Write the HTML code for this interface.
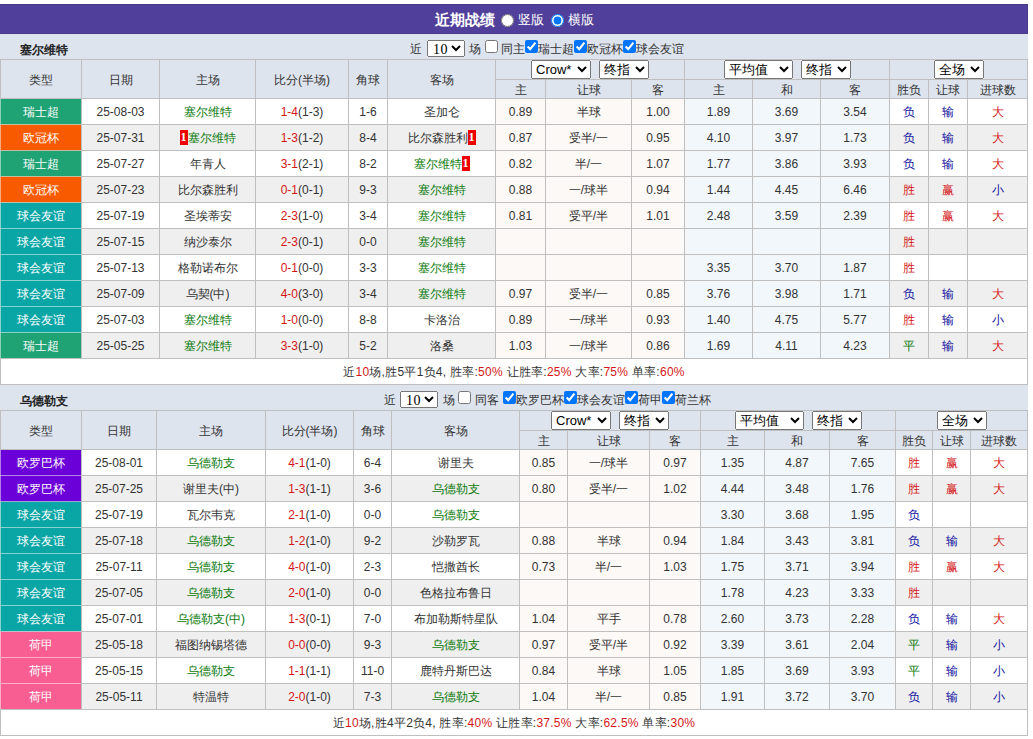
<!DOCTYPE html>
<html><head><meta charset="utf-8">
<style>
html,body{margin:0;padding:0;background:#fff;}
body{width:1033px;height:739px;overflow:hidden;position:relative;font-family:"Liberation Sans",sans-serif;font-size:12px;color:#333;font-weight:400;}
.a{position:absolute;}
.c{position:absolute;text-align:center;white-space:nowrap;overflow:hidden;}
.h{color:#333;}
.t{color:#fff;}
.g{display:flex;align-items:center;justify-content:center;gap:8px;padding-top:0 !important;height:19px !important;}
.rc{display:inline-block;background:#e00;color:#fff;font-weight:bold;width:8px;height:15px;line-height:15px;font-size:12px;vertical-align:middle;text-align:center;position:relative;top:-1px;font-family:'Liberation Serif',serif;}
#bar{position:absolute;left:0;top:4px;width:1027px;height:28px;background:#51409b;border:1px solid #483b8e;border-left:0;color:#fff;}
#bar .ttl{position:absolute;left:435px;top:6px;font-size:15px;font-weight:bold;line-height:18px;}
.tname{position:absolute;left:20px;height:25px;line-height:32px;font-weight:bold;font-size:12px;color:#222;}
.filt{position:absolute;left:0;width:1094px;text-align:center;height:25px;line-height:25px;color:#333;white-space:nowrap;}
.rd{position:absolute;top:9px;margin:0;width:13px;height:13px;}
.rt{position:absolute;top:8px;font-size:12.5px;line-height:14px;}
select{font-family:"Liberation Sans",sans-serif;}
.s10{position:absolute;width:38px;height:17px;font-size:14px;padding:0 0 0 1px;margin:0;letter-spacing:0.5px;font-family:'Liberation Serif',serif !important;}
.ft{position:absolute;line-height:14px;color:#333;white-space:nowrap;}
.cbx{position:absolute;margin:0;}
.sc{height:19px;font-size:13px;padding:0;margin:0;}
input[type=checkbox]{margin:0 1px 0 1px;width:13px;height:13px;vertical-align:middle;}
</style></head><body>
<div id="bar"><span class="ttl">近期战绩</span><input type="radio" name="r" class="rd" style="left:501px"><span class="rt" style="left:518px">竖版</span><input type="radio" name="r" checked class="rd" style="left:551px"><span class="rt" style="left:568px">横版</span></div>
<div class="a" style="left:0px;top:34px;width:1028px;height:25px;background:#dde4ee;"></div>
<div class="tname" style="top:34px">塞尔维特</div>
<span class="ft" style="left:410px;top:42px">近</span>
<select class="s10" style="left:427px;top:40px"><option>10</option></select>
<span class="ft" style="left:469px;top:42px">场</span>
<input type="checkbox" class="cbx" style="left:484px;top:40px">
<span class="ft" style="left:501px;top:42px">同主</span>
<input type="checkbox" checked class="cbx" style="left:524px;top:40px">
<span class="ft" style="left:538px;top:42px">瑞士超</span>
<input type="checkbox" checked class="cbx" style="left:573px;top:40px">
<span class="ft" style="left:587px;top:42px">欧冠杯</span>
<input type="checkbox" checked class="cbx" style="left:622px;top:40px">
<span class="ft" style="left:636px;top:42px">球会友谊</span>
<div class="c h" style="left:1px;top:60px;width:80px;height:37px;padding-top:1px;line-height:38px;background:#dde4ee;">类型</div>
<div class="c h" style="left:82px;top:60px;width:77px;height:37px;padding-top:1px;line-height:38px;background:#dde4ee;">日期</div>
<div class="c h" style="left:160px;top:60px;width:95px;height:37px;padding-top:1px;line-height:38px;background:#dde4ee;">主场</div>
<div class="c h" style="left:256px;top:60px;width:92px;height:37px;padding-top:1px;line-height:38px;background:#dde4ee;">比分(半场)</div>
<div class="c h" style="left:349px;top:60px;width:38px;height:37px;padding-top:1px;line-height:38px;background:#dde4ee;">角球</div>
<div class="c h" style="left:388px;top:60px;width:107px;height:37px;padding-top:1px;line-height:38px;background:#dde4ee;">客场</div>
<div class="c h g" style="left:496px;top:60px;width:188px;height:18px;padding-top:1px;line-height:19px;background:#dde4ee;"><select class="sc" style="width:60px"><option>Crow*</option></select><select class="sc" style="width:50px"><option>终指</option></select></div>
<div class="c h g" style="left:685px;top:60px;width:204px;height:18px;padding-top:1px;line-height:19px;background:#dde4ee;"><select class="sc" style="width:69px"><option>平均值</option></select><select class="sc" style="width:50px"><option>终指</option></select></div>
<div class="c h g" style="left:890px;top:60px;width:137px;height:18px;padding-top:1px;line-height:19px;background:#dde4ee;"><select class="sc" style="width:50px"><option>全场</option></select></div>
<div class="c h" style="left:496px;top:80px;width:49px;height:17px;padding-top:1px;line-height:18px;background:#dde4ee;">主</div>
<div class="c h" style="left:546px;top:80px;width:85px;height:17px;padding-top:1px;line-height:18px;background:#dde4ee;">让球</div>
<div class="c h" style="left:632px;top:80px;width:52px;height:17px;padding-top:1px;line-height:18px;background:#dde4ee;">客</div>
<div class="c h" style="left:685px;top:80px;width:67px;height:17px;padding-top:1px;line-height:18px;background:#dde4ee;">主</div>
<div class="c h" style="left:753px;top:80px;width:67px;height:17px;padding-top:1px;line-height:18px;background:#dde4ee;">和</div>
<div class="c h" style="left:821px;top:80px;width:68px;height:17px;padding-top:1px;line-height:18px;background:#dde4ee;">客</div>
<div class="c h" style="left:890px;top:80px;width:38px;height:17px;padding-top:1px;line-height:18px;background:#dde4ee;">胜负</div>
<div class="c h" style="left:929px;top:80px;width:38px;height:17px;padding-top:1px;line-height:18px;background:#dde4ee;">让球</div>
<div class="c h" style="left:968px;top:80px;width:59px;height:17px;padding-top:1px;line-height:18px;background:#dde4ee;">进球数</div>
<div class="c t" style="left:1px;top:99px;width:80px;height:24px;padding-top:1px;line-height:25px;background:#1fa274;">瑞士超</div>
<div class="c" style="left:82px;top:99px;width:77px;height:24px;padding-top:1px;line-height:25px;background:#ffffff;">25-08-03</div>
<div class="c" style="left:160px;top:99px;width:95px;height:24px;padding-top:1px;line-height:25px;background:#ffffff;"><span style="color:#0c7a0c">塞尔维特</span></div>
<div class="c" style="left:256px;top:99px;width:92px;height:24px;padding-top:1px;line-height:25px;background:#ffffff;"><span style="color:#d41616">1-4</span>(1-3)</div>
<div class="c" style="left:349px;top:99px;width:38px;height:24px;padding-top:1px;line-height:25px;background:#ffffff;">1-6</div>
<div class="c" style="left:388px;top:99px;width:107px;height:24px;padding-top:1px;line-height:25px;background:#ffffff;">圣加仑</div>
<div class="c" style="left:496px;top:99px;width:49px;height:24px;padding-top:1px;line-height:25px;background:#fdf9f6;">0.89</div>
<div class="c" style="left:546px;top:99px;width:85px;height:24px;padding-top:1px;line-height:25px;background:#fdf9f6;">半球</div>
<div class="c" style="left:632px;top:99px;width:52px;height:24px;padding-top:1px;line-height:25px;background:#fdf9f6;">1.00</div>
<div class="c" style="left:685px;top:99px;width:67px;height:24px;padding-top:1px;line-height:25px;background:#f1f7fb;">1.89</div>
<div class="c" style="left:753px;top:99px;width:67px;height:24px;padding-top:1px;line-height:25px;background:#f1f7fb;">3.69</div>
<div class="c" style="left:821px;top:99px;width:68px;height:24px;padding-top:1px;line-height:25px;background:#f1f7fb;">3.54</div>
<div class="c" style="left:890px;top:99px;width:38px;height:24px;padding-top:1px;line-height:25px;background:#ffffff;"><span style="color:#1010a0">负</span></div>
<div class="c" style="left:929px;top:99px;width:38px;height:24px;padding-top:1px;line-height:25px;background:#ffffff;"><span style="color:#1010a0">输</span></div>
<div class="c" style="left:968px;top:99px;width:59px;height:24px;padding-top:1px;line-height:25px;background:#ffffff;"><span style="color:#d41616">大</span></div>
<div class="c t" style="left:1px;top:125px;width:80px;height:24px;padding-top:1px;line-height:25px;background:#f85a00;">欧冠杯</div>
<div class="c" style="left:82px;top:125px;width:77px;height:24px;padding-top:1px;line-height:25px;background:#efefef;">25-07-31</div>
<div class="c" style="left:160px;top:125px;width:95px;height:24px;padding-top:1px;line-height:25px;background:#efefef;"><span class="rc">1</span><span style="color:#0c7a0c">塞尔维特</span></div>
<div class="c" style="left:256px;top:125px;width:92px;height:24px;padding-top:1px;line-height:25px;background:#efefef;"><span style="color:#d41616">1-3</span>(1-2)</div>
<div class="c" style="left:349px;top:125px;width:38px;height:24px;padding-top:1px;line-height:25px;background:#efefef;">8-4</div>
<div class="c" style="left:388px;top:125px;width:107px;height:24px;padding-top:1px;line-height:25px;background:#efefef;">比尔森胜利<span class="rc">1</span></div>
<div class="c" style="left:496px;top:125px;width:49px;height:24px;padding-top:1px;line-height:25px;background:#fdf9f6;">0.87</div>
<div class="c" style="left:546px;top:125px;width:85px;height:24px;padding-top:1px;line-height:25px;background:#fdf9f6;">受半/一</div>
<div class="c" style="left:632px;top:125px;width:52px;height:24px;padding-top:1px;line-height:25px;background:#fdf9f6;">0.95</div>
<div class="c" style="left:685px;top:125px;width:67px;height:24px;padding-top:1px;line-height:25px;background:#f1f7fb;">4.10</div>
<div class="c" style="left:753px;top:125px;width:67px;height:24px;padding-top:1px;line-height:25px;background:#f1f7fb;">3.97</div>
<div class="c" style="left:821px;top:125px;width:68px;height:24px;padding-top:1px;line-height:25px;background:#f1f7fb;">1.73</div>
<div class="c" style="left:890px;top:125px;width:38px;height:24px;padding-top:1px;line-height:25px;background:#efefef;"><span style="color:#1010a0">负</span></div>
<div class="c" style="left:929px;top:125px;width:38px;height:24px;padding-top:1px;line-height:25px;background:#efefef;"><span style="color:#1010a0">输</span></div>
<div class="c" style="left:968px;top:125px;width:59px;height:24px;padding-top:1px;line-height:25px;background:#efefef;"><span style="color:#d41616">大</span></div>
<div class="c t" style="left:1px;top:151px;width:80px;height:24px;padding-top:1px;line-height:25px;background:#1fa274;">瑞士超</div>
<div class="c" style="left:82px;top:151px;width:77px;height:24px;padding-top:1px;line-height:25px;background:#ffffff;">25-07-27</div>
<div class="c" style="left:160px;top:151px;width:95px;height:24px;padding-top:1px;line-height:25px;background:#ffffff;">年青人</div>
<div class="c" style="left:256px;top:151px;width:92px;height:24px;padding-top:1px;line-height:25px;background:#ffffff;"><span style="color:#d41616">3-1</span>(2-1)</div>
<div class="c" style="left:349px;top:151px;width:38px;height:24px;padding-top:1px;line-height:25px;background:#ffffff;">8-2</div>
<div class="c" style="left:388px;top:151px;width:107px;height:24px;padding-top:1px;line-height:25px;background:#ffffff;"><span style="color:#0c7a0c">塞尔维特</span><span class="rc">1</span></div>
<div class="c" style="left:496px;top:151px;width:49px;height:24px;padding-top:1px;line-height:25px;background:#fdf9f6;">0.82</div>
<div class="c" style="left:546px;top:151px;width:85px;height:24px;padding-top:1px;line-height:25px;background:#fdf9f6;">半/一</div>
<div class="c" style="left:632px;top:151px;width:52px;height:24px;padding-top:1px;line-height:25px;background:#fdf9f6;">1.07</div>
<div class="c" style="left:685px;top:151px;width:67px;height:24px;padding-top:1px;line-height:25px;background:#f1f7fb;">1.77</div>
<div class="c" style="left:753px;top:151px;width:67px;height:24px;padding-top:1px;line-height:25px;background:#f1f7fb;">3.86</div>
<div class="c" style="left:821px;top:151px;width:68px;height:24px;padding-top:1px;line-height:25px;background:#f1f7fb;">3.93</div>
<div class="c" style="left:890px;top:151px;width:38px;height:24px;padding-top:1px;line-height:25px;background:#ffffff;"><span style="color:#1010a0">负</span></div>
<div class="c" style="left:929px;top:151px;width:38px;height:24px;padding-top:1px;line-height:25px;background:#ffffff;"><span style="color:#1010a0">输</span></div>
<div class="c" style="left:968px;top:151px;width:59px;height:24px;padding-top:1px;line-height:25px;background:#ffffff;"><span style="color:#d41616">大</span></div>
<div class="c t" style="left:1px;top:177px;width:80px;height:24px;padding-top:1px;line-height:25px;background:#f85a00;">欧冠杯</div>
<div class="c" style="left:82px;top:177px;width:77px;height:24px;padding-top:1px;line-height:25px;background:#efefef;">25-07-23</div>
<div class="c" style="left:160px;top:177px;width:95px;height:24px;padding-top:1px;line-height:25px;background:#efefef;">比尔森胜利</div>
<div class="c" style="left:256px;top:177px;width:92px;height:24px;padding-top:1px;line-height:25px;background:#efefef;"><span style="color:#d41616">0-1</span>(0-1)</div>
<div class="c" style="left:349px;top:177px;width:38px;height:24px;padding-top:1px;line-height:25px;background:#efefef;">9-3</div>
<div class="c" style="left:388px;top:177px;width:107px;height:24px;padding-top:1px;line-height:25px;background:#efefef;"><span style="color:#0c7a0c">塞尔维特</span></div>
<div class="c" style="left:496px;top:177px;width:49px;height:24px;padding-top:1px;line-height:25px;background:#fdf9f6;">0.88</div>
<div class="c" style="left:546px;top:177px;width:85px;height:24px;padding-top:1px;line-height:25px;background:#fdf9f6;">一/球半</div>
<div class="c" style="left:632px;top:177px;width:52px;height:24px;padding-top:1px;line-height:25px;background:#fdf9f6;">0.94</div>
<div class="c" style="left:685px;top:177px;width:67px;height:24px;padding-top:1px;line-height:25px;background:#f1f7fb;">1.44</div>
<div class="c" style="left:753px;top:177px;width:67px;height:24px;padding-top:1px;line-height:25px;background:#f1f7fb;">4.45</div>
<div class="c" style="left:821px;top:177px;width:68px;height:24px;padding-top:1px;line-height:25px;background:#f1f7fb;">6.46</div>
<div class="c" style="left:890px;top:177px;width:38px;height:24px;padding-top:1px;line-height:25px;background:#efefef;"><span style="color:#d41616">胜</span></div>
<div class="c" style="left:929px;top:177px;width:38px;height:24px;padding-top:1px;line-height:25px;background:#efefef;"><span style="color:#d41616">赢</span></div>
<div class="c" style="left:968px;top:177px;width:59px;height:24px;padding-top:1px;line-height:25px;background:#efefef;"><span style="color:#1010a0">小</span></div>
<div class="c t" style="left:1px;top:203px;width:80px;height:24px;padding-top:1px;line-height:25px;background:#0aa6a6;">球会友谊</div>
<div class="c" style="left:82px;top:203px;width:77px;height:24px;padding-top:1px;line-height:25px;background:#ffffff;">25-07-19</div>
<div class="c" style="left:160px;top:203px;width:95px;height:24px;padding-top:1px;line-height:25px;background:#ffffff;">圣埃蒂安</div>
<div class="c" style="left:256px;top:203px;width:92px;height:24px;padding-top:1px;line-height:25px;background:#ffffff;"><span style="color:#d41616">2-3</span>(1-0)</div>
<div class="c" style="left:349px;top:203px;width:38px;height:24px;padding-top:1px;line-height:25px;background:#ffffff;">3-4</div>
<div class="c" style="left:388px;top:203px;width:107px;height:24px;padding-top:1px;line-height:25px;background:#ffffff;"><span style="color:#0c7a0c">塞尔维特</span></div>
<div class="c" style="left:496px;top:203px;width:49px;height:24px;padding-top:1px;line-height:25px;background:#fdf9f6;">0.81</div>
<div class="c" style="left:546px;top:203px;width:85px;height:24px;padding-top:1px;line-height:25px;background:#fdf9f6;">受平/半</div>
<div class="c" style="left:632px;top:203px;width:52px;height:24px;padding-top:1px;line-height:25px;background:#fdf9f6;">1.01</div>
<div class="c" style="left:685px;top:203px;width:67px;height:24px;padding-top:1px;line-height:25px;background:#f1f7fb;">2.48</div>
<div class="c" style="left:753px;top:203px;width:67px;height:24px;padding-top:1px;line-height:25px;background:#f1f7fb;">3.59</div>
<div class="c" style="left:821px;top:203px;width:68px;height:24px;padding-top:1px;line-height:25px;background:#f1f7fb;">2.39</div>
<div class="c" style="left:890px;top:203px;width:38px;height:24px;padding-top:1px;line-height:25px;background:#ffffff;"><span style="color:#d41616">胜</span></div>
<div class="c" style="left:929px;top:203px;width:38px;height:24px;padding-top:1px;line-height:25px;background:#ffffff;"><span style="color:#d41616">赢</span></div>
<div class="c" style="left:968px;top:203px;width:59px;height:24px;padding-top:1px;line-height:25px;background:#ffffff;"><span style="color:#d41616">大</span></div>
<div class="c t" style="left:1px;top:229px;width:80px;height:24px;padding-top:1px;line-height:25px;background:#0aa6a6;">球会友谊</div>
<div class="c" style="left:82px;top:229px;width:77px;height:24px;padding-top:1px;line-height:25px;background:#efefef;">25-07-15</div>
<div class="c" style="left:160px;top:229px;width:95px;height:24px;padding-top:1px;line-height:25px;background:#efefef;">纳沙泰尔</div>
<div class="c" style="left:256px;top:229px;width:92px;height:24px;padding-top:1px;line-height:25px;background:#efefef;"><span style="color:#d41616">2-3</span>(0-1)</div>
<div class="c" style="left:349px;top:229px;width:38px;height:24px;padding-top:1px;line-height:25px;background:#efefef;">0-0</div>
<div class="c" style="left:388px;top:229px;width:107px;height:24px;padding-top:1px;line-height:25px;background:#efefef;"><span style="color:#0c7a0c">塞尔维特</span></div>
<div class="c" style="left:496px;top:229px;width:49px;height:24px;padding-top:1px;line-height:25px;background:#fdf9f6;"></div>
<div class="c" style="left:546px;top:229px;width:85px;height:24px;padding-top:1px;line-height:25px;background:#fdf9f6;"></div>
<div class="c" style="left:632px;top:229px;width:52px;height:24px;padding-top:1px;line-height:25px;background:#fdf9f6;"></div>
<div class="c" style="left:685px;top:229px;width:67px;height:24px;padding-top:1px;line-height:25px;background:#f1f7fb;"></div>
<div class="c" style="left:753px;top:229px;width:67px;height:24px;padding-top:1px;line-height:25px;background:#f1f7fb;"></div>
<div class="c" style="left:821px;top:229px;width:68px;height:24px;padding-top:1px;line-height:25px;background:#f1f7fb;"></div>
<div class="c" style="left:890px;top:229px;width:38px;height:24px;padding-top:1px;line-height:25px;background:#efefef;"><span style="color:#d41616">胜</span></div>
<div class="c" style="left:929px;top:229px;width:38px;height:24px;padding-top:1px;line-height:25px;background:#efefef;"><span style="color:#1010a0"></span></div>
<div class="c" style="left:968px;top:229px;width:59px;height:24px;padding-top:1px;line-height:25px;background:#efefef;"><span style="color:#1010a0"></span></div>
<div class="c t" style="left:1px;top:255px;width:80px;height:24px;padding-top:1px;line-height:25px;background:#0aa6a6;">球会友谊</div>
<div class="c" style="left:82px;top:255px;width:77px;height:24px;padding-top:1px;line-height:25px;background:#ffffff;">25-07-13</div>
<div class="c" style="left:160px;top:255px;width:95px;height:24px;padding-top:1px;line-height:25px;background:#ffffff;">格勒诺布尔</div>
<div class="c" style="left:256px;top:255px;width:92px;height:24px;padding-top:1px;line-height:25px;background:#ffffff;"><span style="color:#d41616">0-1</span>(0-0)</div>
<div class="c" style="left:349px;top:255px;width:38px;height:24px;padding-top:1px;line-height:25px;background:#ffffff;">3-3</div>
<div class="c" style="left:388px;top:255px;width:107px;height:24px;padding-top:1px;line-height:25px;background:#ffffff;"><span style="color:#0c7a0c">塞尔维特</span></div>
<div class="c" style="left:496px;top:255px;width:49px;height:24px;padding-top:1px;line-height:25px;background:#fdf9f6;"></div>
<div class="c" style="left:546px;top:255px;width:85px;height:24px;padding-top:1px;line-height:25px;background:#fdf9f6;"></div>
<div class="c" style="left:632px;top:255px;width:52px;height:24px;padding-top:1px;line-height:25px;background:#fdf9f6;"></div>
<div class="c" style="left:685px;top:255px;width:67px;height:24px;padding-top:1px;line-height:25px;background:#f1f7fb;">3.35</div>
<div class="c" style="left:753px;top:255px;width:67px;height:24px;padding-top:1px;line-height:25px;background:#f1f7fb;">3.70</div>
<div class="c" style="left:821px;top:255px;width:68px;height:24px;padding-top:1px;line-height:25px;background:#f1f7fb;">1.87</div>
<div class="c" style="left:890px;top:255px;width:38px;height:24px;padding-top:1px;line-height:25px;background:#ffffff;"><span style="color:#d41616">胜</span></div>
<div class="c" style="left:929px;top:255px;width:38px;height:24px;padding-top:1px;line-height:25px;background:#ffffff;"><span style="color:#1010a0"></span></div>
<div class="c" style="left:968px;top:255px;width:59px;height:24px;padding-top:1px;line-height:25px;background:#ffffff;"><span style="color:#1010a0"></span></div>
<div class="c t" style="left:1px;top:281px;width:80px;height:24px;padding-top:1px;line-height:25px;background:#0aa6a6;">球会友谊</div>
<div class="c" style="left:82px;top:281px;width:77px;height:24px;padding-top:1px;line-height:25px;background:#efefef;">25-07-09</div>
<div class="c" style="left:160px;top:281px;width:95px;height:24px;padding-top:1px;line-height:25px;background:#efefef;">乌契(中)</div>
<div class="c" style="left:256px;top:281px;width:92px;height:24px;padding-top:1px;line-height:25px;background:#efefef;"><span style="color:#d41616">4-0</span>(3-0)</div>
<div class="c" style="left:349px;top:281px;width:38px;height:24px;padding-top:1px;line-height:25px;background:#efefef;">3-4</div>
<div class="c" style="left:388px;top:281px;width:107px;height:24px;padding-top:1px;line-height:25px;background:#efefef;"><span style="color:#0c7a0c">塞尔维特</span></div>
<div class="c" style="left:496px;top:281px;width:49px;height:24px;padding-top:1px;line-height:25px;background:#fdf9f6;">0.97</div>
<div class="c" style="left:546px;top:281px;width:85px;height:24px;padding-top:1px;line-height:25px;background:#fdf9f6;">受半/一</div>
<div class="c" style="left:632px;top:281px;width:52px;height:24px;padding-top:1px;line-height:25px;background:#fdf9f6;">0.85</div>
<div class="c" style="left:685px;top:281px;width:67px;height:24px;padding-top:1px;line-height:25px;background:#f1f7fb;">3.76</div>
<div class="c" style="left:753px;top:281px;width:67px;height:24px;padding-top:1px;line-height:25px;background:#f1f7fb;">3.98</div>
<div class="c" style="left:821px;top:281px;width:68px;height:24px;padding-top:1px;line-height:25px;background:#f1f7fb;">1.71</div>
<div class="c" style="left:890px;top:281px;width:38px;height:24px;padding-top:1px;line-height:25px;background:#efefef;"><span style="color:#1010a0">负</span></div>
<div class="c" style="left:929px;top:281px;width:38px;height:24px;padding-top:1px;line-height:25px;background:#efefef;"><span style="color:#1010a0">输</span></div>
<div class="c" style="left:968px;top:281px;width:59px;height:24px;padding-top:1px;line-height:25px;background:#efefef;"><span style="color:#d41616">大</span></div>
<div class="c t" style="left:1px;top:307px;width:80px;height:24px;padding-top:1px;line-height:25px;background:#0aa6a6;">球会友谊</div>
<div class="c" style="left:82px;top:307px;width:77px;height:24px;padding-top:1px;line-height:25px;background:#ffffff;">25-07-03</div>
<div class="c" style="left:160px;top:307px;width:95px;height:24px;padding-top:1px;line-height:25px;background:#ffffff;"><span style="color:#0c7a0c">塞尔维特</span></div>
<div class="c" style="left:256px;top:307px;width:92px;height:24px;padding-top:1px;line-height:25px;background:#ffffff;"><span style="color:#d41616">1-0</span>(0-0)</div>
<div class="c" style="left:349px;top:307px;width:38px;height:24px;padding-top:1px;line-height:25px;background:#ffffff;">8-8</div>
<div class="c" style="left:388px;top:307px;width:107px;height:24px;padding-top:1px;line-height:25px;background:#ffffff;">卡洛治</div>
<div class="c" style="left:496px;top:307px;width:49px;height:24px;padding-top:1px;line-height:25px;background:#fdf9f6;">0.89</div>
<div class="c" style="left:546px;top:307px;width:85px;height:24px;padding-top:1px;line-height:25px;background:#fdf9f6;">一/球半</div>
<div class="c" style="left:632px;top:307px;width:52px;height:24px;padding-top:1px;line-height:25px;background:#fdf9f6;">0.93</div>
<div class="c" style="left:685px;top:307px;width:67px;height:24px;padding-top:1px;line-height:25px;background:#f1f7fb;">1.40</div>
<div class="c" style="left:753px;top:307px;width:67px;height:24px;padding-top:1px;line-height:25px;background:#f1f7fb;">4.75</div>
<div class="c" style="left:821px;top:307px;width:68px;height:24px;padding-top:1px;line-height:25px;background:#f1f7fb;">5.77</div>
<div class="c" style="left:890px;top:307px;width:38px;height:24px;padding-top:1px;line-height:25px;background:#ffffff;"><span style="color:#d41616">胜</span></div>
<div class="c" style="left:929px;top:307px;width:38px;height:24px;padding-top:1px;line-height:25px;background:#ffffff;"><span style="color:#1010a0">输</span></div>
<div class="c" style="left:968px;top:307px;width:59px;height:24px;padding-top:1px;line-height:25px;background:#ffffff;"><span style="color:#1010a0">小</span></div>
<div class="c t" style="left:1px;top:333px;width:80px;height:24px;padding-top:1px;line-height:25px;background:#1fa274;">瑞士超</div>
<div class="c" style="left:82px;top:333px;width:77px;height:24px;padding-top:1px;line-height:25px;background:#efefef;">25-05-25</div>
<div class="c" style="left:160px;top:333px;width:95px;height:24px;padding-top:1px;line-height:25px;background:#efefef;"><span style="color:#0c7a0c">塞尔维特</span></div>
<div class="c" style="left:256px;top:333px;width:92px;height:24px;padding-top:1px;line-height:25px;background:#efefef;"><span style="color:#d41616">3-3</span>(1-0)</div>
<div class="c" style="left:349px;top:333px;width:38px;height:24px;padding-top:1px;line-height:25px;background:#efefef;">5-2</div>
<div class="c" style="left:388px;top:333px;width:107px;height:24px;padding-top:1px;line-height:25px;background:#efefef;">洛桑</div>
<div class="c" style="left:496px;top:333px;width:49px;height:24px;padding-top:1px;line-height:25px;background:#fdf9f6;">1.03</div>
<div class="c" style="left:546px;top:333px;width:85px;height:24px;padding-top:1px;line-height:25px;background:#fdf9f6;">一/球半</div>
<div class="c" style="left:632px;top:333px;width:52px;height:24px;padding-top:1px;line-height:25px;background:#fdf9f6;">0.86</div>
<div class="c" style="left:685px;top:333px;width:67px;height:24px;padding-top:1px;line-height:25px;background:#f1f7fb;">1.69</div>
<div class="c" style="left:753px;top:333px;width:67px;height:24px;padding-top:1px;line-height:25px;background:#f1f7fb;">4.11</div>
<div class="c" style="left:821px;top:333px;width:68px;height:24px;padding-top:1px;line-height:25px;background:#f1f7fb;">4.23</div>
<div class="c" style="left:890px;top:333px;width:38px;height:24px;padding-top:1px;line-height:25px;background:#efefef;"><span style="color:#0c7a0c">平</span></div>
<div class="c" style="left:929px;top:333px;width:38px;height:24px;padding-top:1px;line-height:25px;background:#efefef;"><span style="color:#1010a0">输</span></div>
<div class="c" style="left:968px;top:333px;width:59px;height:24px;padding-top:1px;line-height:25px;background:#efefef;"><span style="color:#d41616">大</span></div>
<div class="c" style="left:1px;top:359px;width:1026px;height:24px;padding-top:1px;line-height:25px;background:#ffffff;"><span style="letter-spacing:0.26px">近<span style="color:#d41616">10</span>场,胜5平1负4, 胜率:<span style="color:#d41616">50%</span> 让胜率:<span style="color:#d41616">25%</span> 大率:<span style="color:#d41616">75%</span> 单率:<span style="color:#d41616">60%</span></span></div>
<div class="a" style="left:0px;top:59px;width:1028px;height:1px;background:#bfbfbf;"></div>
<div class="a" style="left:495px;top:79px;width:533px;height:1px;background:#bfbfbf;"></div>
<div class="a" style="left:0px;top:98px;width:1028px;height:1px;background:#bfbfbf;"></div>
<div class="a" style="left:0px;top:124px;width:1028px;height:1px;background:#bfbfbf;"></div>
<div class="a" style="left:0px;top:150px;width:1028px;height:1px;background:#bfbfbf;"></div>
<div class="a" style="left:0px;top:176px;width:1028px;height:1px;background:#bfbfbf;"></div>
<div class="a" style="left:0px;top:202px;width:1028px;height:1px;background:#bfbfbf;"></div>
<div class="a" style="left:0px;top:228px;width:1028px;height:1px;background:#bfbfbf;"></div>
<div class="a" style="left:0px;top:254px;width:1028px;height:1px;background:#bfbfbf;"></div>
<div class="a" style="left:0px;top:280px;width:1028px;height:1px;background:#bfbfbf;"></div>
<div class="a" style="left:0px;top:306px;width:1028px;height:1px;background:#bfbfbf;"></div>
<div class="a" style="left:0px;top:332px;width:1028px;height:1px;background:#bfbfbf;"></div>
<div class="a" style="left:0px;top:358px;width:1028px;height:1px;background:#bfbfbf;"></div>
<div class="a" style="left:0px;top:384px;width:1028px;height:1px;background:#bfbfbf;"></div>
<div class="a" style="left:0px;top:59px;width:1px;height:326px;background:#bfbfbf;"></div>
<div class="a" style="left:81px;top:59px;width:1px;height:300px;background:#bfbfbf;"></div>
<div class="a" style="left:159px;top:59px;width:1px;height:300px;background:#bfbfbf;"></div>
<div class="a" style="left:255px;top:59px;width:1px;height:300px;background:#bfbfbf;"></div>
<div class="a" style="left:348px;top:59px;width:1px;height:300px;background:#bfbfbf;"></div>
<div class="a" style="left:387px;top:59px;width:1px;height:300px;background:#bfbfbf;"></div>
<div class="a" style="left:495px;top:59px;width:1px;height:300px;background:#bfbfbf;"></div>
<div class="a" style="left:545px;top:79px;width:1px;height:280px;background:#bfbfbf;"></div>
<div class="a" style="left:631px;top:79px;width:1px;height:280px;background:#bfbfbf;"></div>
<div class="a" style="left:684px;top:59px;width:1px;height:300px;background:#bfbfbf;"></div>
<div class="a" style="left:752px;top:79px;width:1px;height:280px;background:#bfbfbf;"></div>
<div class="a" style="left:820px;top:79px;width:1px;height:280px;background:#bfbfbf;"></div>
<div class="a" style="left:889px;top:59px;width:1px;height:300px;background:#bfbfbf;"></div>
<div class="a" style="left:928px;top:79px;width:1px;height:280px;background:#bfbfbf;"></div>
<div class="a" style="left:967px;top:79px;width:1px;height:280px;background:#bfbfbf;"></div>
<div class="a" style="left:1027px;top:59px;width:1px;height:326px;background:#bfbfbf;"></div>
<div class="a" style="left:0px;top:385px;width:1028px;height:25px;background:#dde4ee;"></div>
<div class="tname" style="top:385px">乌德勒支</div>
<span class="ft" style="left:384px;top:393px">近</span>
<select class="s10" style="left:400px;top:391px"><option>10</option></select>
<span class="ft" style="left:443px;top:393px">场</span>
<input type="checkbox" class="cbx" style="left:457px;top:391px">
<span class="ft" style="left:475px;top:393px">同客</span>
<input type="checkbox" checked class="cbx" style="left:502px;top:391px">
<span class="ft" style="left:516px;top:393px">欧罗巴杯</span>
<input type="checkbox" checked class="cbx" style="left:563px;top:391px">
<span class="ft" style="left:577px;top:393px">球会友谊</span>
<input type="checkbox" checked class="cbx" style="left:624px;top:391px">
<span class="ft" style="left:638px;top:393px">荷甲</span>
<input type="checkbox" checked class="cbx" style="left:661px;top:391px">
<span class="ft" style="left:675px;top:393px">荷兰杯</span>
<div class="c h" style="left:1px;top:411px;width:80px;height:37px;padding-top:1px;line-height:38px;background:#dde4ee;">类型</div>
<div class="c h" style="left:82px;top:411px;width:74px;height:37px;padding-top:1px;line-height:38px;background:#dde4ee;">日期</div>
<div class="c h" style="left:157px;top:411px;width:108px;height:37px;padding-top:1px;line-height:38px;background:#dde4ee;">主场</div>
<div class="c h" style="left:266px;top:411px;width:87px;height:37px;padding-top:1px;line-height:38px;background:#dde4ee;">比分(半场)</div>
<div class="c h" style="left:354px;top:411px;width:37px;height:37px;padding-top:1px;line-height:38px;background:#dde4ee;">角球</div>
<div class="c h" style="left:392px;top:411px;width:127px;height:37px;padding-top:1px;line-height:38px;background:#dde4ee;">客场</div>
<div class="c h g" style="left:520px;top:411px;width:180px;height:18px;padding-top:1px;line-height:19px;background:#dde4ee;"><select class="sc" style="width:60px"><option>Crow*</option></select><select class="sc" style="width:50px"><option>终指</option></select></div>
<div class="c h g" style="left:701px;top:411px;width:194px;height:18px;padding-top:1px;line-height:19px;background:#dde4ee;"><select class="sc" style="width:69px"><option>平均值</option></select><select class="sc" style="width:50px"><option>终指</option></select></div>
<div class="c h g" style="left:896px;top:411px;width:131px;height:18px;padding-top:1px;line-height:19px;background:#dde4ee;"><select class="sc" style="width:50px"><option>全场</option></select></div>
<div class="c h" style="left:520px;top:431px;width:47px;height:17px;padding-top:1px;line-height:18px;background:#dde4ee;">主</div>
<div class="c h" style="left:568px;top:431px;width:81px;height:17px;padding-top:1px;line-height:18px;background:#dde4ee;">让球</div>
<div class="c h" style="left:650px;top:431px;width:50px;height:17px;padding-top:1px;line-height:18px;background:#dde4ee;">客</div>
<div class="c h" style="left:701px;top:431px;width:63px;height:17px;padding-top:1px;line-height:18px;background:#dde4ee;">主</div>
<div class="c h" style="left:765px;top:431px;width:64px;height:17px;padding-top:1px;line-height:18px;background:#dde4ee;">和</div>
<div class="c h" style="left:830px;top:431px;width:65px;height:17px;padding-top:1px;line-height:18px;background:#dde4ee;">客</div>
<div class="c h" style="left:896px;top:431px;width:36px;height:17px;padding-top:1px;line-height:18px;background:#dde4ee;">胜负</div>
<div class="c h" style="left:933px;top:431px;width:37px;height:17px;padding-top:1px;line-height:18px;background:#dde4ee;">让球</div>
<div class="c h" style="left:971px;top:431px;width:56px;height:17px;padding-top:1px;line-height:18px;background:#dde4ee;">进球数</div>
<div class="c t" style="left:1px;top:450px;width:80px;height:24px;padding-top:1px;line-height:25px;background:#6c00d8;">欧罗巴杯</div>
<div class="c" style="left:82px;top:450px;width:74px;height:24px;padding-top:1px;line-height:25px;background:#ffffff;">25-08-01</div>
<div class="c" style="left:157px;top:450px;width:108px;height:24px;padding-top:1px;line-height:25px;background:#ffffff;"><span style="color:#0c7a0c">乌德勒支</span></div>
<div class="c" style="left:266px;top:450px;width:87px;height:24px;padding-top:1px;line-height:25px;background:#ffffff;"><span style="color:#d41616">4-1</span>(1-0)</div>
<div class="c" style="left:354px;top:450px;width:37px;height:24px;padding-top:1px;line-height:25px;background:#ffffff;">6-4</div>
<div class="c" style="left:392px;top:450px;width:127px;height:24px;padding-top:1px;line-height:25px;background:#ffffff;">谢里夫</div>
<div class="c" style="left:520px;top:450px;width:47px;height:24px;padding-top:1px;line-height:25px;background:#fdf9f6;">0.85</div>
<div class="c" style="left:568px;top:450px;width:81px;height:24px;padding-top:1px;line-height:25px;background:#fdf9f6;">一/球半</div>
<div class="c" style="left:650px;top:450px;width:50px;height:24px;padding-top:1px;line-height:25px;background:#fdf9f6;">0.97</div>
<div class="c" style="left:701px;top:450px;width:63px;height:24px;padding-top:1px;line-height:25px;background:#f1f7fb;">1.35</div>
<div class="c" style="left:765px;top:450px;width:64px;height:24px;padding-top:1px;line-height:25px;background:#f1f7fb;">4.87</div>
<div class="c" style="left:830px;top:450px;width:65px;height:24px;padding-top:1px;line-height:25px;background:#f1f7fb;">7.65</div>
<div class="c" style="left:896px;top:450px;width:36px;height:24px;padding-top:1px;line-height:25px;background:#ffffff;"><span style="color:#d41616">胜</span></div>
<div class="c" style="left:933px;top:450px;width:37px;height:24px;padding-top:1px;line-height:25px;background:#ffffff;"><span style="color:#d41616">赢</span></div>
<div class="c" style="left:971px;top:450px;width:56px;height:24px;padding-top:1px;line-height:25px;background:#ffffff;"><span style="color:#d41616">大</span></div>
<div class="c t" style="left:1px;top:476px;width:80px;height:24px;padding-top:1px;line-height:25px;background:#6c00d8;">欧罗巴杯</div>
<div class="c" style="left:82px;top:476px;width:74px;height:24px;padding-top:1px;line-height:25px;background:#efefef;">25-07-25</div>
<div class="c" style="left:157px;top:476px;width:108px;height:24px;padding-top:1px;line-height:25px;background:#efefef;">谢里夫(中)</div>
<div class="c" style="left:266px;top:476px;width:87px;height:24px;padding-top:1px;line-height:25px;background:#efefef;"><span style="color:#d41616">1-3</span>(1-1)</div>
<div class="c" style="left:354px;top:476px;width:37px;height:24px;padding-top:1px;line-height:25px;background:#efefef;">3-6</div>
<div class="c" style="left:392px;top:476px;width:127px;height:24px;padding-top:1px;line-height:25px;background:#efefef;"><span style="color:#0c7a0c">乌德勒支</span></div>
<div class="c" style="left:520px;top:476px;width:47px;height:24px;padding-top:1px;line-height:25px;background:#fdf9f6;">0.80</div>
<div class="c" style="left:568px;top:476px;width:81px;height:24px;padding-top:1px;line-height:25px;background:#fdf9f6;">受半/一</div>
<div class="c" style="left:650px;top:476px;width:50px;height:24px;padding-top:1px;line-height:25px;background:#fdf9f6;">1.02</div>
<div class="c" style="left:701px;top:476px;width:63px;height:24px;padding-top:1px;line-height:25px;background:#f1f7fb;">4.44</div>
<div class="c" style="left:765px;top:476px;width:64px;height:24px;padding-top:1px;line-height:25px;background:#f1f7fb;">3.48</div>
<div class="c" style="left:830px;top:476px;width:65px;height:24px;padding-top:1px;line-height:25px;background:#f1f7fb;">1.76</div>
<div class="c" style="left:896px;top:476px;width:36px;height:24px;padding-top:1px;line-height:25px;background:#efefef;"><span style="color:#d41616">胜</span></div>
<div class="c" style="left:933px;top:476px;width:37px;height:24px;padding-top:1px;line-height:25px;background:#efefef;"><span style="color:#d41616">赢</span></div>
<div class="c" style="left:971px;top:476px;width:56px;height:24px;padding-top:1px;line-height:25px;background:#efefef;"><span style="color:#d41616">大</span></div>
<div class="c t" style="left:1px;top:502px;width:80px;height:24px;padding-top:1px;line-height:25px;background:#0aa6a6;">球会友谊</div>
<div class="c" style="left:82px;top:502px;width:74px;height:24px;padding-top:1px;line-height:25px;background:#ffffff;">25-07-19</div>
<div class="c" style="left:157px;top:502px;width:108px;height:24px;padding-top:1px;line-height:25px;background:#ffffff;">瓦尔韦克</div>
<div class="c" style="left:266px;top:502px;width:87px;height:24px;padding-top:1px;line-height:25px;background:#ffffff;"><span style="color:#d41616">2-1</span>(1-0)</div>
<div class="c" style="left:354px;top:502px;width:37px;height:24px;padding-top:1px;line-height:25px;background:#ffffff;">0-0</div>
<div class="c" style="left:392px;top:502px;width:127px;height:24px;padding-top:1px;line-height:25px;background:#ffffff;"><span style="color:#0c7a0c">乌德勒支</span></div>
<div class="c" style="left:520px;top:502px;width:47px;height:24px;padding-top:1px;line-height:25px;background:#fdf9f6;"></div>
<div class="c" style="left:568px;top:502px;width:81px;height:24px;padding-top:1px;line-height:25px;background:#fdf9f6;"></div>
<div class="c" style="left:650px;top:502px;width:50px;height:24px;padding-top:1px;line-height:25px;background:#fdf9f6;"></div>
<div class="c" style="left:701px;top:502px;width:63px;height:24px;padding-top:1px;line-height:25px;background:#f1f7fb;">3.30</div>
<div class="c" style="left:765px;top:502px;width:64px;height:24px;padding-top:1px;line-height:25px;background:#f1f7fb;">3.68</div>
<div class="c" style="left:830px;top:502px;width:65px;height:24px;padding-top:1px;line-height:25px;background:#f1f7fb;">1.95</div>
<div class="c" style="left:896px;top:502px;width:36px;height:24px;padding-top:1px;line-height:25px;background:#ffffff;"><span style="color:#1010a0">负</span></div>
<div class="c" style="left:933px;top:502px;width:37px;height:24px;padding-top:1px;line-height:25px;background:#ffffff;"><span style="color:#1010a0"></span></div>
<div class="c" style="left:971px;top:502px;width:56px;height:24px;padding-top:1px;line-height:25px;background:#ffffff;"><span style="color:#1010a0"></span></div>
<div class="c t" style="left:1px;top:528px;width:80px;height:24px;padding-top:1px;line-height:25px;background:#0aa6a6;">球会友谊</div>
<div class="c" style="left:82px;top:528px;width:74px;height:24px;padding-top:1px;line-height:25px;background:#efefef;">25-07-18</div>
<div class="c" style="left:157px;top:528px;width:108px;height:24px;padding-top:1px;line-height:25px;background:#efefef;"><span style="color:#0c7a0c">乌德勒支</span></div>
<div class="c" style="left:266px;top:528px;width:87px;height:24px;padding-top:1px;line-height:25px;background:#efefef;"><span style="color:#d41616">1-2</span>(1-0)</div>
<div class="c" style="left:354px;top:528px;width:37px;height:24px;padding-top:1px;line-height:25px;background:#efefef;">9-2</div>
<div class="c" style="left:392px;top:528px;width:127px;height:24px;padding-top:1px;line-height:25px;background:#efefef;">沙勒罗瓦</div>
<div class="c" style="left:520px;top:528px;width:47px;height:24px;padding-top:1px;line-height:25px;background:#fdf9f6;">0.88</div>
<div class="c" style="left:568px;top:528px;width:81px;height:24px;padding-top:1px;line-height:25px;background:#fdf9f6;">半球</div>
<div class="c" style="left:650px;top:528px;width:50px;height:24px;padding-top:1px;line-height:25px;background:#fdf9f6;">0.94</div>
<div class="c" style="left:701px;top:528px;width:63px;height:24px;padding-top:1px;line-height:25px;background:#f1f7fb;">1.84</div>
<div class="c" style="left:765px;top:528px;width:64px;height:24px;padding-top:1px;line-height:25px;background:#f1f7fb;">3.43</div>
<div class="c" style="left:830px;top:528px;width:65px;height:24px;padding-top:1px;line-height:25px;background:#f1f7fb;">3.81</div>
<div class="c" style="left:896px;top:528px;width:36px;height:24px;padding-top:1px;line-height:25px;background:#efefef;"><span style="color:#1010a0">负</span></div>
<div class="c" style="left:933px;top:528px;width:37px;height:24px;padding-top:1px;line-height:25px;background:#efefef;"><span style="color:#1010a0">输</span></div>
<div class="c" style="left:971px;top:528px;width:56px;height:24px;padding-top:1px;line-height:25px;background:#efefef;"><span style="color:#d41616">大</span></div>
<div class="c t" style="left:1px;top:554px;width:80px;height:24px;padding-top:1px;line-height:25px;background:#0aa6a6;">球会友谊</div>
<div class="c" style="left:82px;top:554px;width:74px;height:24px;padding-top:1px;line-height:25px;background:#ffffff;">25-07-11</div>
<div class="c" style="left:157px;top:554px;width:108px;height:24px;padding-top:1px;line-height:25px;background:#ffffff;"><span style="color:#0c7a0c">乌德勒支</span></div>
<div class="c" style="left:266px;top:554px;width:87px;height:24px;padding-top:1px;line-height:25px;background:#ffffff;"><span style="color:#d41616">4-0</span>(1-0)</div>
<div class="c" style="left:354px;top:554px;width:37px;height:24px;padding-top:1px;line-height:25px;background:#ffffff;">2-3</div>
<div class="c" style="left:392px;top:554px;width:127px;height:24px;padding-top:1px;line-height:25px;background:#ffffff;">恺撒酋长</div>
<div class="c" style="left:520px;top:554px;width:47px;height:24px;padding-top:1px;line-height:25px;background:#fdf9f6;">0.73</div>
<div class="c" style="left:568px;top:554px;width:81px;height:24px;padding-top:1px;line-height:25px;background:#fdf9f6;">半/一</div>
<div class="c" style="left:650px;top:554px;width:50px;height:24px;padding-top:1px;line-height:25px;background:#fdf9f6;">1.03</div>
<div class="c" style="left:701px;top:554px;width:63px;height:24px;padding-top:1px;line-height:25px;background:#f1f7fb;">1.75</div>
<div class="c" style="left:765px;top:554px;width:64px;height:24px;padding-top:1px;line-height:25px;background:#f1f7fb;">3.71</div>
<div class="c" style="left:830px;top:554px;width:65px;height:24px;padding-top:1px;line-height:25px;background:#f1f7fb;">3.94</div>
<div class="c" style="left:896px;top:554px;width:36px;height:24px;padding-top:1px;line-height:25px;background:#ffffff;"><span style="color:#d41616">胜</span></div>
<div class="c" style="left:933px;top:554px;width:37px;height:24px;padding-top:1px;line-height:25px;background:#ffffff;"><span style="color:#d41616">赢</span></div>
<div class="c" style="left:971px;top:554px;width:56px;height:24px;padding-top:1px;line-height:25px;background:#ffffff;"><span style="color:#d41616">大</span></div>
<div class="c t" style="left:1px;top:580px;width:80px;height:24px;padding-top:1px;line-height:25px;background:#0aa6a6;">球会友谊</div>
<div class="c" style="left:82px;top:580px;width:74px;height:24px;padding-top:1px;line-height:25px;background:#efefef;">25-07-05</div>
<div class="c" style="left:157px;top:580px;width:108px;height:24px;padding-top:1px;line-height:25px;background:#efefef;"><span style="color:#0c7a0c">乌德勒支</span></div>
<div class="c" style="left:266px;top:580px;width:87px;height:24px;padding-top:1px;line-height:25px;background:#efefef;"><span style="color:#d41616">2-0</span>(1-0)</div>
<div class="c" style="left:354px;top:580px;width:37px;height:24px;padding-top:1px;line-height:25px;background:#efefef;">0-0</div>
<div class="c" style="left:392px;top:580px;width:127px;height:24px;padding-top:1px;line-height:25px;background:#efefef;">色格拉布鲁日</div>
<div class="c" style="left:520px;top:580px;width:47px;height:24px;padding-top:1px;line-height:25px;background:#fdf9f6;"></div>
<div class="c" style="left:568px;top:580px;width:81px;height:24px;padding-top:1px;line-height:25px;background:#fdf9f6;"></div>
<div class="c" style="left:650px;top:580px;width:50px;height:24px;padding-top:1px;line-height:25px;background:#fdf9f6;"></div>
<div class="c" style="left:701px;top:580px;width:63px;height:24px;padding-top:1px;line-height:25px;background:#f1f7fb;">1.78</div>
<div class="c" style="left:765px;top:580px;width:64px;height:24px;padding-top:1px;line-height:25px;background:#f1f7fb;">4.23</div>
<div class="c" style="left:830px;top:580px;width:65px;height:24px;padding-top:1px;line-height:25px;background:#f1f7fb;">3.33</div>
<div class="c" style="left:896px;top:580px;width:36px;height:24px;padding-top:1px;line-height:25px;background:#efefef;"><span style="color:#d41616">胜</span></div>
<div class="c" style="left:933px;top:580px;width:37px;height:24px;padding-top:1px;line-height:25px;background:#efefef;"><span style="color:#1010a0"></span></div>
<div class="c" style="left:971px;top:580px;width:56px;height:24px;padding-top:1px;line-height:25px;background:#efefef;"><span style="color:#1010a0"></span></div>
<div class="c t" style="left:1px;top:606px;width:80px;height:24px;padding-top:1px;line-height:25px;background:#0aa6a6;">球会友谊</div>
<div class="c" style="left:82px;top:606px;width:74px;height:24px;padding-top:1px;line-height:25px;background:#ffffff;">25-07-01</div>
<div class="c" style="left:157px;top:606px;width:108px;height:24px;padding-top:1px;line-height:25px;background:#ffffff;"><span style="color:#0c7a0c">乌德勒支(中)</span></div>
<div class="c" style="left:266px;top:606px;width:87px;height:24px;padding-top:1px;line-height:25px;background:#ffffff;"><span style="color:#d41616">1-3</span>(0-1)</div>
<div class="c" style="left:354px;top:606px;width:37px;height:24px;padding-top:1px;line-height:25px;background:#ffffff;">7-0</div>
<div class="c" style="left:392px;top:606px;width:127px;height:24px;padding-top:1px;line-height:25px;background:#ffffff;">布加勒斯特星队</div>
<div class="c" style="left:520px;top:606px;width:47px;height:24px;padding-top:1px;line-height:25px;background:#fdf9f6;">1.04</div>
<div class="c" style="left:568px;top:606px;width:81px;height:24px;padding-top:1px;line-height:25px;background:#fdf9f6;">平手</div>
<div class="c" style="left:650px;top:606px;width:50px;height:24px;padding-top:1px;line-height:25px;background:#fdf9f6;">0.78</div>
<div class="c" style="left:701px;top:606px;width:63px;height:24px;padding-top:1px;line-height:25px;background:#f1f7fb;">2.60</div>
<div class="c" style="left:765px;top:606px;width:64px;height:24px;padding-top:1px;line-height:25px;background:#f1f7fb;">3.73</div>
<div class="c" style="left:830px;top:606px;width:65px;height:24px;padding-top:1px;line-height:25px;background:#f1f7fb;">2.28</div>
<div class="c" style="left:896px;top:606px;width:36px;height:24px;padding-top:1px;line-height:25px;background:#ffffff;"><span style="color:#1010a0">负</span></div>
<div class="c" style="left:933px;top:606px;width:37px;height:24px;padding-top:1px;line-height:25px;background:#ffffff;"><span style="color:#1010a0">输</span></div>
<div class="c" style="left:971px;top:606px;width:56px;height:24px;padding-top:1px;line-height:25px;background:#ffffff;"><span style="color:#d41616">大</span></div>
<div class="c t" style="left:1px;top:632px;width:80px;height:24px;padding-top:1px;line-height:25px;background:#f85e92;">荷甲</div>
<div class="c" style="left:82px;top:632px;width:74px;height:24px;padding-top:1px;line-height:25px;background:#efefef;">25-05-18</div>
<div class="c" style="left:157px;top:632px;width:108px;height:24px;padding-top:1px;line-height:25px;background:#efefef;">福图纳锡塔德</div>
<div class="c" style="left:266px;top:632px;width:87px;height:24px;padding-top:1px;line-height:25px;background:#efefef;"><span style="color:#d41616">0-0</span>(0-0)</div>
<div class="c" style="left:354px;top:632px;width:37px;height:24px;padding-top:1px;line-height:25px;background:#efefef;">9-3</div>
<div class="c" style="left:392px;top:632px;width:127px;height:24px;padding-top:1px;line-height:25px;background:#efefef;"><span style="color:#0c7a0c">乌德勒支</span></div>
<div class="c" style="left:520px;top:632px;width:47px;height:24px;padding-top:1px;line-height:25px;background:#fdf9f6;">0.97</div>
<div class="c" style="left:568px;top:632px;width:81px;height:24px;padding-top:1px;line-height:25px;background:#fdf9f6;">受平/半</div>
<div class="c" style="left:650px;top:632px;width:50px;height:24px;padding-top:1px;line-height:25px;background:#fdf9f6;">0.92</div>
<div class="c" style="left:701px;top:632px;width:63px;height:24px;padding-top:1px;line-height:25px;background:#f1f7fb;">3.39</div>
<div class="c" style="left:765px;top:632px;width:64px;height:24px;padding-top:1px;line-height:25px;background:#f1f7fb;">3.61</div>
<div class="c" style="left:830px;top:632px;width:65px;height:24px;padding-top:1px;line-height:25px;background:#f1f7fb;">2.04</div>
<div class="c" style="left:896px;top:632px;width:36px;height:24px;padding-top:1px;line-height:25px;background:#efefef;"><span style="color:#0c7a0c">平</span></div>
<div class="c" style="left:933px;top:632px;width:37px;height:24px;padding-top:1px;line-height:25px;background:#efefef;"><span style="color:#1010a0">输</span></div>
<div class="c" style="left:971px;top:632px;width:56px;height:24px;padding-top:1px;line-height:25px;background:#efefef;"><span style="color:#1010a0">小</span></div>
<div class="c t" style="left:1px;top:658px;width:80px;height:24px;padding-top:1px;line-height:25px;background:#f85e92;">荷甲</div>
<div class="c" style="left:82px;top:658px;width:74px;height:24px;padding-top:1px;line-height:25px;background:#ffffff;">25-05-15</div>
<div class="c" style="left:157px;top:658px;width:108px;height:24px;padding-top:1px;line-height:25px;background:#ffffff;"><span style="color:#0c7a0c">乌德勒支</span></div>
<div class="c" style="left:266px;top:658px;width:87px;height:24px;padding-top:1px;line-height:25px;background:#ffffff;"><span style="color:#d41616">1-1</span>(1-1)</div>
<div class="c" style="left:354px;top:658px;width:37px;height:24px;padding-top:1px;line-height:25px;background:#ffffff;">11-0</div>
<div class="c" style="left:392px;top:658px;width:127px;height:24px;padding-top:1px;line-height:25px;background:#ffffff;">鹿特丹斯巴达</div>
<div class="c" style="left:520px;top:658px;width:47px;height:24px;padding-top:1px;line-height:25px;background:#fdf9f6;">0.84</div>
<div class="c" style="left:568px;top:658px;width:81px;height:24px;padding-top:1px;line-height:25px;background:#fdf9f6;">半球</div>
<div class="c" style="left:650px;top:658px;width:50px;height:24px;padding-top:1px;line-height:25px;background:#fdf9f6;">1.05</div>
<div class="c" style="left:701px;top:658px;width:63px;height:24px;padding-top:1px;line-height:25px;background:#f1f7fb;">1.85</div>
<div class="c" style="left:765px;top:658px;width:64px;height:24px;padding-top:1px;line-height:25px;background:#f1f7fb;">3.69</div>
<div class="c" style="left:830px;top:658px;width:65px;height:24px;padding-top:1px;line-height:25px;background:#f1f7fb;">3.93</div>
<div class="c" style="left:896px;top:658px;width:36px;height:24px;padding-top:1px;line-height:25px;background:#ffffff;"><span style="color:#0c7a0c">平</span></div>
<div class="c" style="left:933px;top:658px;width:37px;height:24px;padding-top:1px;line-height:25px;background:#ffffff;"><span style="color:#1010a0">输</span></div>
<div class="c" style="left:971px;top:658px;width:56px;height:24px;padding-top:1px;line-height:25px;background:#ffffff;"><span style="color:#1010a0">小</span></div>
<div class="c t" style="left:1px;top:684px;width:80px;height:24px;padding-top:1px;line-height:25px;background:#f85e92;">荷甲</div>
<div class="c" style="left:82px;top:684px;width:74px;height:24px;padding-top:1px;line-height:25px;background:#efefef;">25-05-11</div>
<div class="c" style="left:157px;top:684px;width:108px;height:24px;padding-top:1px;line-height:25px;background:#efefef;">特温特</div>
<div class="c" style="left:266px;top:684px;width:87px;height:24px;padding-top:1px;line-height:25px;background:#efefef;"><span style="color:#d41616">2-0</span>(1-0)</div>
<div class="c" style="left:354px;top:684px;width:37px;height:24px;padding-top:1px;line-height:25px;background:#efefef;">7-3</div>
<div class="c" style="left:392px;top:684px;width:127px;height:24px;padding-top:1px;line-height:25px;background:#efefef;"><span style="color:#0c7a0c">乌德勒支</span></div>
<div class="c" style="left:520px;top:684px;width:47px;height:24px;padding-top:1px;line-height:25px;background:#fdf9f6;">1.04</div>
<div class="c" style="left:568px;top:684px;width:81px;height:24px;padding-top:1px;line-height:25px;background:#fdf9f6;">半/一</div>
<div class="c" style="left:650px;top:684px;width:50px;height:24px;padding-top:1px;line-height:25px;background:#fdf9f6;">0.85</div>
<div class="c" style="left:701px;top:684px;width:63px;height:24px;padding-top:1px;line-height:25px;background:#f1f7fb;">1.91</div>
<div class="c" style="left:765px;top:684px;width:64px;height:24px;padding-top:1px;line-height:25px;background:#f1f7fb;">3.72</div>
<div class="c" style="left:830px;top:684px;width:65px;height:24px;padding-top:1px;line-height:25px;background:#f1f7fb;">3.70</div>
<div class="c" style="left:896px;top:684px;width:36px;height:24px;padding-top:1px;line-height:25px;background:#efefef;"><span style="color:#1010a0">负</span></div>
<div class="c" style="left:933px;top:684px;width:37px;height:24px;padding-top:1px;line-height:25px;background:#efefef;"><span style="color:#1010a0">输</span></div>
<div class="c" style="left:971px;top:684px;width:56px;height:24px;padding-top:1px;line-height:25px;background:#efefef;"><span style="color:#1010a0">小</span></div>
<div class="c" style="left:1px;top:710px;width:1026px;height:24px;padding-top:1px;line-height:25px;background:#ffffff;"><span style="letter-spacing:0.26px">近<span style="color:#d41616">10</span>场,胜4平2负4, 胜率:<span style="color:#d41616">40%</span> 让胜率:<span style="color:#d41616">37.5%</span> 大率:<span style="color:#d41616">62.5%</span> 单率:<span style="color:#d41616">30%</span></span></div>
<div class="a" style="left:0px;top:410px;width:1028px;height:1px;background:#bfbfbf;"></div>
<div class="a" style="left:519px;top:430px;width:509px;height:1px;background:#bfbfbf;"></div>
<div class="a" style="left:0px;top:449px;width:1028px;height:1px;background:#bfbfbf;"></div>
<div class="a" style="left:0px;top:475px;width:1028px;height:1px;background:#bfbfbf;"></div>
<div class="a" style="left:0px;top:501px;width:1028px;height:1px;background:#bfbfbf;"></div>
<div class="a" style="left:0px;top:527px;width:1028px;height:1px;background:#bfbfbf;"></div>
<div class="a" style="left:0px;top:553px;width:1028px;height:1px;background:#bfbfbf;"></div>
<div class="a" style="left:0px;top:579px;width:1028px;height:1px;background:#bfbfbf;"></div>
<div class="a" style="left:0px;top:605px;width:1028px;height:1px;background:#bfbfbf;"></div>
<div class="a" style="left:0px;top:631px;width:1028px;height:1px;background:#bfbfbf;"></div>
<div class="a" style="left:0px;top:657px;width:1028px;height:1px;background:#bfbfbf;"></div>
<div class="a" style="left:0px;top:683px;width:1028px;height:1px;background:#bfbfbf;"></div>
<div class="a" style="left:0px;top:709px;width:1028px;height:1px;background:#bfbfbf;"></div>
<div class="a" style="left:0px;top:735px;width:1028px;height:1px;background:#bfbfbf;"></div>
<div class="a" style="left:0px;top:410px;width:1px;height:326px;background:#bfbfbf;"></div>
<div class="a" style="left:81px;top:410px;width:1px;height:300px;background:#bfbfbf;"></div>
<div class="a" style="left:156px;top:410px;width:1px;height:300px;background:#bfbfbf;"></div>
<div class="a" style="left:265px;top:410px;width:1px;height:300px;background:#bfbfbf;"></div>
<div class="a" style="left:353px;top:410px;width:1px;height:300px;background:#bfbfbf;"></div>
<div class="a" style="left:391px;top:410px;width:1px;height:300px;background:#bfbfbf;"></div>
<div class="a" style="left:519px;top:410px;width:1px;height:300px;background:#bfbfbf;"></div>
<div class="a" style="left:567px;top:430px;width:1px;height:280px;background:#bfbfbf;"></div>
<div class="a" style="left:649px;top:430px;width:1px;height:280px;background:#bfbfbf;"></div>
<div class="a" style="left:700px;top:410px;width:1px;height:300px;background:#bfbfbf;"></div>
<div class="a" style="left:764px;top:430px;width:1px;height:280px;background:#bfbfbf;"></div>
<div class="a" style="left:829px;top:430px;width:1px;height:280px;background:#bfbfbf;"></div>
<div class="a" style="left:895px;top:410px;width:1px;height:300px;background:#bfbfbf;"></div>
<div class="a" style="left:932px;top:430px;width:1px;height:280px;background:#bfbfbf;"></div>
<div class="a" style="left:970px;top:430px;width:1px;height:280px;background:#bfbfbf;"></div>
<div class="a" style="left:1027px;top:410px;width:1px;height:326px;background:#bfbfbf;"></div>
<div class="a" style="left:0px;top:99px;width:1px;height:25px;background:#8fd0b9;"></div>
<div class="a" style="left:0px;top:125px;width:1px;height:25px;background:#fbac7f;"></div>
<div class="a" style="left:1px;top:124px;width:80px;height:1px;background:#c5be9c;"></div>
<div class="a" style="left:0px;top:151px;width:1px;height:25px;background:#8fd0b9;"></div>
<div class="a" style="left:1px;top:150px;width:80px;height:1px;background:#c5be9c;"></div>
<div class="a" style="left:0px;top:177px;width:1px;height:25px;background:#fbac7f;"></div>
<div class="a" style="left:1px;top:176px;width:80px;height:1px;background:#c5be9c;"></div>
<div class="a" style="left:0px;top:203px;width:1px;height:25px;background:#84d2d2;"></div>
<div class="a" style="left:1px;top:202px;width:80px;height:1px;background:#bfbfa8;"></div>
<div class="a" style="left:0px;top:229px;width:1px;height:25px;background:#84d2d2;"></div>
<div class="a" style="left:1px;top:228px;width:80px;height:1px;background:#84d2d2;"></div>
<div class="a" style="left:0px;top:255px;width:1px;height:25px;background:#84d2d2;"></div>
<div class="a" style="left:1px;top:254px;width:80px;height:1px;background:#84d2d2;"></div>
<div class="a" style="left:0px;top:281px;width:1px;height:25px;background:#84d2d2;"></div>
<div class="a" style="left:1px;top:280px;width:80px;height:1px;background:#84d2d2;"></div>
<div class="a" style="left:0px;top:307px;width:1px;height:25px;background:#84d2d2;"></div>
<div class="a" style="left:1px;top:306px;width:80px;height:1px;background:#84d2d2;"></div>
<div class="a" style="left:0px;top:333px;width:1px;height:25px;background:#8fd0b9;"></div>
<div class="a" style="left:1px;top:332px;width:80px;height:1px;background:#89d1c5;"></div>
<div class="a" style="left:0px;top:450px;width:1px;height:25px;background:#b57feb;"></div>
<div class="a" style="left:0px;top:476px;width:1px;height:25px;background:#b57feb;"></div>
<div class="a" style="left:1px;top:475px;width:80px;height:1px;background:#b57feb;"></div>
<div class="a" style="left:0px;top:502px;width:1px;height:25px;background:#84d2d2;"></div>
<div class="a" style="left:1px;top:501px;width:80px;height:1px;background:#9ca8de;"></div>
<div class="a" style="left:0px;top:528px;width:1px;height:25px;background:#84d2d2;"></div>
<div class="a" style="left:1px;top:527px;width:80px;height:1px;background:#84d2d2;"></div>
<div class="a" style="left:0px;top:554px;width:1px;height:25px;background:#84d2d2;"></div>
<div class="a" style="left:1px;top:553px;width:80px;height:1px;background:#84d2d2;"></div>
<div class="a" style="left:0px;top:580px;width:1px;height:25px;background:#84d2d2;"></div>
<div class="a" style="left:1px;top:579px;width:80px;height:1px;background:#84d2d2;"></div>
<div class="a" style="left:0px;top:606px;width:1px;height:25px;background:#84d2d2;"></div>
<div class="a" style="left:1px;top:605px;width:80px;height:1px;background:#84d2d2;"></div>
<div class="a" style="left:0px;top:632px;width:1px;height:25px;background:#fbaec8;"></div>
<div class="a" style="left:1px;top:631px;width:80px;height:1px;background:#bfc0cd;"></div>
<div class="a" style="left:0px;top:658px;width:1px;height:25px;background:#fbaec8;"></div>
<div class="a" style="left:1px;top:657px;width:80px;height:1px;background:#fbaec8;"></div>
<div class="a" style="left:0px;top:684px;width:1px;height:25px;background:#fbaec8;"></div>
<div class="a" style="left:1px;top:683px;width:80px;height:1px;background:#fbaec8;"></div>
</body></html>
